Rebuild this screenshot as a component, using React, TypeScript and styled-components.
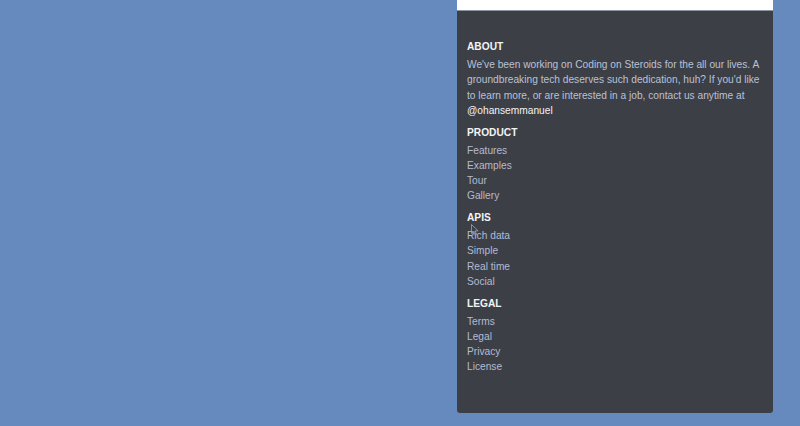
import React from "react";
import styled, { createGlobalStyle } from "styled-components";

const Global = createGlobalStyle`
  html, body { margin: 0; padding: 0; }
  body {
    background: #668abd;
    font-family: "Liberation Sans", Arial, sans-serif;
    -webkit-font-smoothing: antialiased;
  }
`;

const Page = styled.div`
  display: flex;
  justify-content: flex-start;
  padding-left: 457px;
  height: 426px;
  box-sizing: border-box;
`;

const Panel = styled.div`
  width: 316px;
  height: 413px;
  display: flex;
  flex-direction: column;
  background: #3d3f47;
  border-radius: 0 0 3px 3px;
  overflow: hidden;
  position: relative;
`;

const TopCard = styled.div`
  height: 10px;
  background: #ffffff;
  border-bottom: 1px solid #8d94a3;
`;

const Content = styled.div`
  padding: 28px 10px 0 10px;
  display: flex;
  flex-direction: column;
`;

const Section = styled.section`
  display: flex;
  flex-direction: column;
  margin-bottom: 6.6px;
`;

const Heading = styled.h4`
  margin: 0 0 3px 0;
  font-size: 10.2px;
  font-weight: 700;
  line-height: 15px;
  color: #f2f3f5;
  text-transform: uppercase;
`;

const Body = styled.p`
  margin: 0;
  font-size: 10.2px;
  line-height: 15.3px;
  color: #b9c1d6;
`;

const Handle = styled.span`
  color: #f2f3f5;
`;

const LinkItem = styled.a`
  display: block;
  font-size: 10.2px;
  line-height: 15.2px;
  color: #b3bbd1;
  text-decoration: none;
`;

const Cursor = styled.svg`
  position: absolute;
  left: 14px;
  top: 224px;
`;

const sections = [
  { title: "Product", links: ["Features", "Examples", "Tour", "Gallery"] },
  { title: "APIs", links: ["Rich data", "Simple", "Real time", "Social"] },
  { title: "Legal", links: ["Terms", "Legal", "Privacy", "License"] },
];

export default function App() {
  return (
    <>
      <Global />
      <Page>
        <Panel>
          <TopCard />
          <Content>
            <Section>
              <Heading>About</Heading>
              <Body>
                We've been working on Coding on Steroids for the all our lives. A groundbreaking
                tech deserves such dedication, huh? If you'd like to learn more, or are interested
                in a job, contact us anytime at <Handle>@ohansemmanuel</Handle>
              </Body>
            </Section>
            {sections.map((s) => (
              <Section key={s.title}>
                <Heading>{s.title}</Heading>
                {s.links.map((l) => (
                  <LinkItem key={l} href="#">
                    {l}
                  </LinkItem>
                ))}
              </Section>
            ))}
          </Content>
          <Cursor width="8" height="12" viewBox="0 0 8 12">
            <path d="M0.5 0.5 L0.5 9.5 L2.8 7.4 L4.4 11 L5.6 10.4 L4.1 6.9 L7.2 6.9 Z" fill="none" stroke="#9aa3b8" strokeWidth="0.8" />
          </Cursor>
        </Panel>
      </Page>
    </>
  );
}
